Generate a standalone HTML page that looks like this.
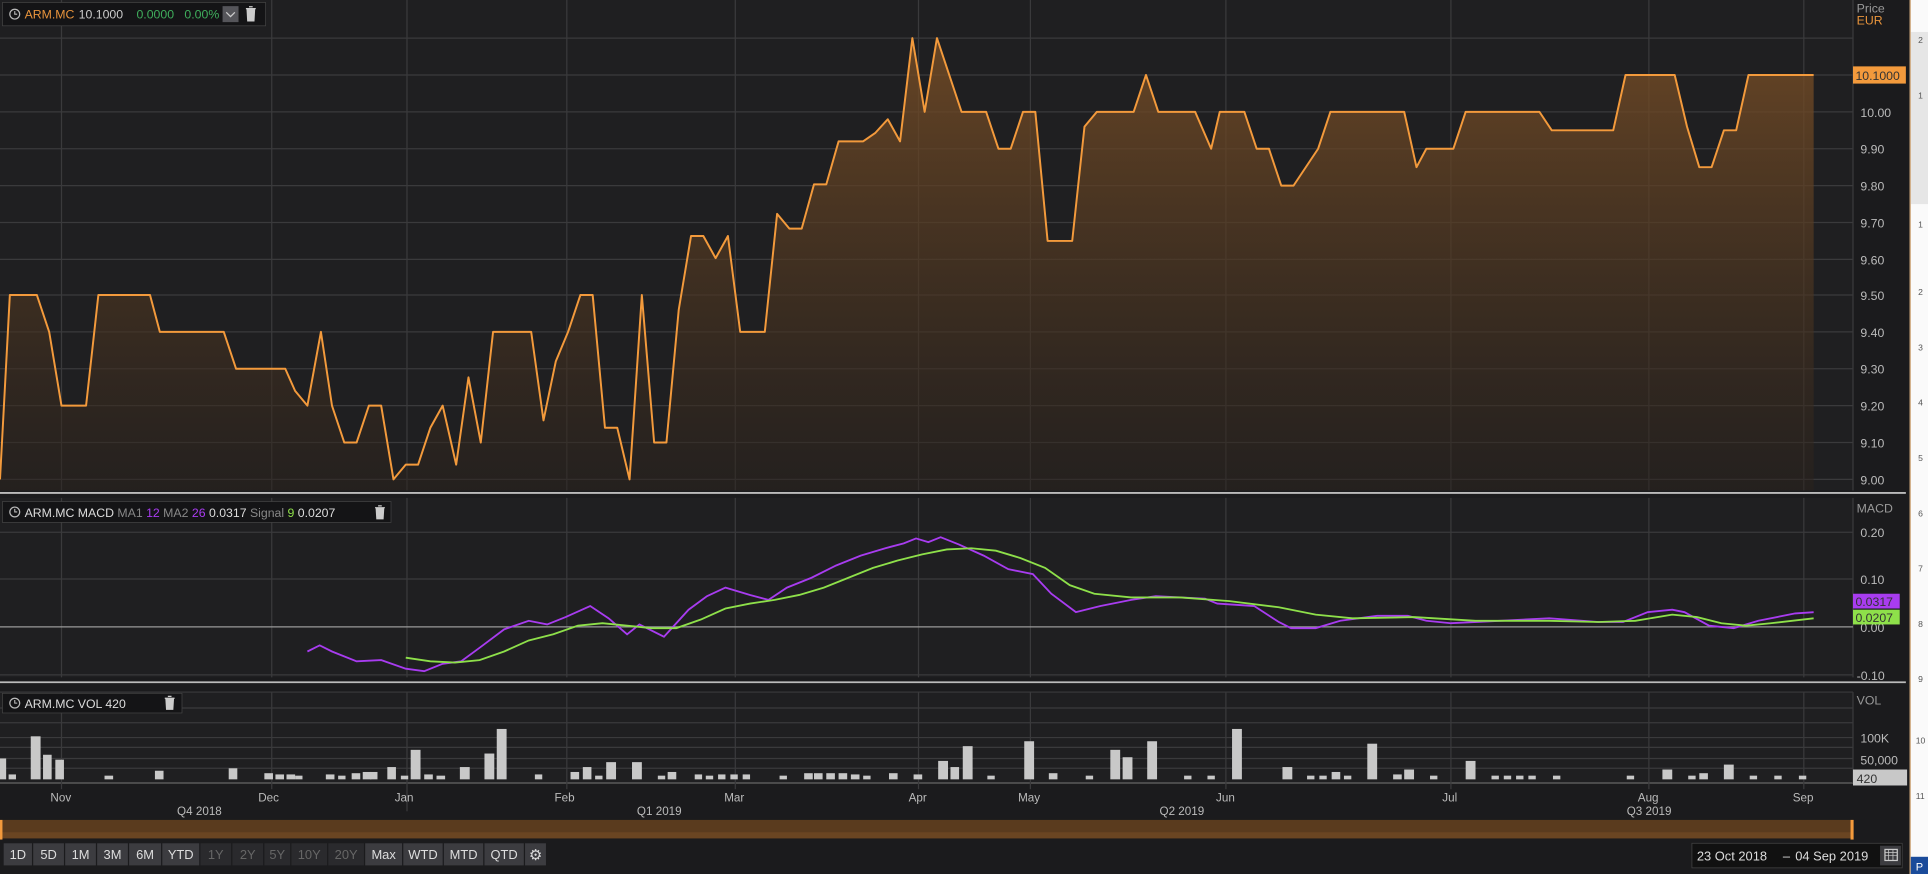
<!DOCTYPE html>
<html><head><meta charset="utf-8"><style>
html,body{margin:0;padding:0;background:#1b1b1d;overflow:hidden}
svg{display:block}
text{font-family:"Liberation Sans",sans-serif}
</style></head><body>
<svg width="1928" height="874" viewBox="0 0 1568 711" preserveAspectRatio="none" xmlns="http://www.w3.org/2000/svg">
<defs>
<linearGradient id="pf" x1="0" y1="0" x2="0" y2="1">
<stop offset="0" stop-color="#7a4f26" stop-opacity="0.8"/>
<stop offset="1" stop-color="#2a221c" stop-opacity="0.5"/>
</linearGradient>
</defs>
<rect x="0" y="0" width="1568" height="711" fill="#1b1b1d"/>
<rect x="0" y="0" width="1507" height="399" fill="#1f1f21"/>
<g stroke="#3a3a3c" stroke-width="1">
<line x1="0" y1="31" x2="1507" y2="31"/><line x1="0" y1="61" x2="1507" y2="61"/><line x1="0" y1="91" x2="1507" y2="91"/><line x1="0" y1="121" x2="1507" y2="121"/><line x1="0" y1="151" x2="1507" y2="151"/><line x1="0" y1="181" x2="1507" y2="181"/><line x1="0" y1="211" x2="1507" y2="211"/><line x1="0" y1="240" x2="1507" y2="240"/><line x1="0" y1="270" x2="1507" y2="270"/><line x1="0" y1="300" x2="1507" y2="300"/><line x1="0" y1="330" x2="1507" y2="330"/><line x1="0" y1="360" x2="1507" y2="360"/><line x1="0" y1="390" x2="1507" y2="390"/>
<line x1="50" y1="0" x2="50" y2="399"/><line x1="221" y1="0" x2="221" y2="399"/><line x1="331" y1="0" x2="331" y2="399"/><line x1="461" y1="0" x2="461" y2="399"/><line x1="598" y1="0" x2="598" y2="399"/><line x1="747" y1="0" x2="747" y2="399"/><line x1="838" y1="0" x2="838" y2="399"/><line x1="997" y1="0" x2="997" y2="399"/><line x1="1180" y1="0" x2="1180" y2="399"/><line x1="1341" y1="0" x2="1341" y2="399"/><line x1="1467" y1="0" x2="1467" y2="399"/>
<line x1="1507" y1="0" x2="1507" y2="399"/>
</g>
<path fill="url(#pf)" d="M0,390 L8,240 L30,240 L40,270 L50,330 L70,330 L80,240 L122,240 L130,270 L182,270 L192,300 L232,300 L240,318 L250,330 L261,270 L270,330 L280,360 L290,360 L300,330 L310,330 L320,390 L330,378 L340,378 L350,348 L360,330 L371,378 L381,307 L391,360 L401,270 L432,270 L442,342 L452,294 L462,270 L472,240 L482,240 L492,348 L502,348 L512,390 L522,240 L532,360 L542,360 L552,252 L562,192 L572,192 L582,210 L592,192 L602,270 L622,270 L632,174 L642,186 L652,186 L662,150 L672,150 L682,115 L702,115 L712,108 L722,97 L732,115 L742,31 L752,91 L762,31 L782,91 L802,91 L812,121 L822,121 L832,91 L842,91 L852,196 L872,196 L882,103 L892,91 L922,91 L932,61 L942,91 L972,91 L985,121 L992,91 L1012,91 L1022,121 L1032,121 L1042,151 L1052,151 L1072,121 L1082,91 L1142,91 L1152,136 L1160,121 L1182,121 L1192,91 L1252,91 L1262,106 L1312,106 L1322,61 L1362,61 L1372,103 L1382,136 L1392,136 L1402,106 L1412,106 L1422,61 L1475,61 L1475,399 L0,399 Z"/>
<path fill="none" stroke="#f39a3c" stroke-width="1.6" stroke-linejoin="round" d="M0,390 L8,240 L30,240 L40,270 L50,330 L70,330 L80,240 L122,240 L130,270 L182,270 L192,300 L232,300 L240,318 L250,330 L261,270 L270,330 L280,360 L290,360 L300,330 L310,330 L320,390 L330,378 L340,378 L350,348 L360,330 L371,378 L381,307 L391,360 L401,270 L432,270 L442,342 L452,294 L462,270 L472,240 L482,240 L492,348 L502,348 L512,390 L522,240 L532,360 L542,360 L552,252 L562,192 L572,192 L582,210 L592,192 L602,270 L622,270 L632,174 L642,186 L652,186 L662,150 L672,150 L682,115 L702,115 L712,108 L722,97 L732,115 L742,31 L752,91 L762,31 L782,91 L802,91 L812,121 L822,121 L832,91 L842,91 L852,196 L872,196 L882,103 L892,91 L922,91 L932,61 L942,91 L972,91 L985,121 L992,91 L1012,91 L1022,121 L1032,121 L1042,151 L1052,151 L1072,121 L1082,91 L1142,91 L1152,136 L1160,121 L1182,121 L1192,91 L1252,91 L1262,106 L1312,106 L1322,61 L1362,61 L1372,103 L1382,136 L1392,136 L1402,106 L1412,106 L1422,61 L1475,61"/>
<rect x="2" y="2" width="214" height="19" fill="#141416" stroke="#444" stroke-width="0.6"/>
<circle cx="12" cy="11.5" r="4" fill="none" stroke="#bbb" stroke-width="1"/><path d="M12,9 L12,11.5 L14,11.5" stroke="#bbb" fill="none" stroke-width="0.9"/>
<text x="20" y="15" font-size="10" fill="#e8943c">ARM.MC</text>
<text x="64" y="15" font-size="10" fill="#ccc">10.1000</text>
<text x="111" y="15" font-size="10" fill="#3fae5c">0.0000</text>
<text x="150" y="15" font-size="10" fill="#3fae5c">0.00%</text>
<rect x="181" y="5" width="13" height="13" fill="#55555a"/><path d="M184,10 L187.5,13.5 L191,10" stroke="#ccc" fill="none" stroke-width="1"/>
<path d="M200,7 L208,7 M202.5,5.5 L205.5,5.5 M201,8 L201.5,17 L206.5,17 L207,8 Z" stroke="#ccc" fill="#ccc" stroke-width="1"/>
<g font-size="10" fill="#bbb">
<text x="1510" y="10" fill="#999">Price</text><text x="1510" y="20" fill="#e8943c">EUR</text>
<text x="1513" y="95">10.00</text><text x="1513" y="125">9.90</text><text x="1513" y="155">9.80</text><text x="1513" y="185">9.70</text><text x="1513" y="215">9.60</text><text x="1513" y="244">9.50</text><text x="1513" y="274">9.40</text><text x="1513" y="304">9.30</text><text x="1513" y="334">9.20</text><text x="1513" y="364">9.10</text><text x="1513" y="394">9.00</text>
</g>
<rect x="1507" y="54" width="43" height="14" fill="#f39a3c"/><text x="1509" y="65" font-size="10" fill="#333">10.1000</text>
<line x1="0" y1="401" x2="1550" y2="401" stroke="#bbb" stroke-width="1.5"/>
<rect x="0" y="405" width="1507" height="146" fill="#1f1f21"/>
<g stroke="#3a3a3c"><line x1="0" y1="433" x2="1507" y2="433"/><line x1="0" y1="471" x2="1507" y2="471"/><line x1="0" y1="549" x2="1507" y2="549"/><line x1="1507" y1="405" x2="1507" y2="551"/>
<line x1="50" y1="405" x2="50" y2="551"/><line x1="221" y1="405" x2="221" y2="551"/><line x1="331" y1="405" x2="331" y2="551"/><line x1="461" y1="405" x2="461" y2="551"/><line x1="598" y1="405" x2="598" y2="551"/><line x1="747" y1="405" x2="747" y2="551"/><line x1="838" y1="405" x2="838" y2="551"/><line x1="997" y1="405" x2="997" y2="551"/><line x1="1180" y1="405" x2="1180" y2="551"/><line x1="1341" y1="405" x2="1341" y2="551"/><line x1="1467" y1="405" x2="1467" y2="551"/></g>
<line x1="0" y1="510" x2="1507" y2="510" stroke="#999"/>
<path fill="none" stroke="#a83cf0" stroke-width="1.5" d="M250,530 L260,525 L270,530 L290,538 L310,537 L330,544 L345,546 L360,540 L375,538 L390,527 L410,512 L430,505 L445,508 L460,502 L480,493 L495,503 L510,516 L520,508 L540,518 L560,496 L575,485 L590,478 L610,484 L625,488 L640,478 L660,470 L680,460 L700,452 L720,446 L735,442 L745,438 L755,441 L765,437 L780,443 L800,452 L820,463 L840,467 L855,483 L875,498 L895,493 L920,488 L940,485 L960,486 L980,487 L990,491 L1020,493 L1040,506 L1050,511 L1070,511 L1090,505 L1120,501 L1145,501 L1160,505 L1180,507 L1220,505 L1260,503 L1300,506 L1320,506 L1340,498 L1360,496 L1370,498 L1390,509 L1410,511 L1430,505 L1460,499 L1475,498"/>
<path fill="none" stroke="#8ee04a" stroke-width="1.5" d="M330,535 L350,538 L370,539 L390,537 L410,530 L430,521 L450,516 L470,509 L490,507 L510,509 L530,511 L550,511 L570,504 L590,495 L610,491 L630,488 L650,484 L670,478 L690,470 L710,462 L730,456 L750,451 L770,447 L790,446 L810,448 L830,454 L850,462 L870,476 L890,483 L920,486 L960,486 L1000,489 L1040,494 L1070,500 L1100,503 L1150,502 L1200,505 L1260,505 L1300,506 L1330,505 L1360,500 L1380,502 L1400,507 L1420,509 L1440,507 L1475,503"/>
<rect x="2" y="408" width="316" height="17" fill="#141416" stroke="#444" stroke-width="0.6"/>
<circle cx="12" cy="416.5" r="4" fill="none" stroke="#bbb"/><path d="M12,414 L12,416.5 L14,416.5" stroke="#bbb" fill="none" stroke-width="0.9"/>
<text x="20" y="420.5" font-size="10" fill="#ddd">ARM.MC MACD <tspan fill="#888">MA1</tspan> <tspan fill="#a83cf0">12</tspan> <tspan fill="#888">MA2</tspan> <tspan fill="#a83cf0">26</tspan> 0.0317 <tspan fill="#888">Signal</tspan> <tspan fill="#8ee04a">9</tspan> 0.0207</text>
<path d="M305,413 L313,413 M307.5,411.5 L310.5,411.5 M306,414 L306.5,422 L311.5,422 L312,414 Z" stroke="#ccc" fill="#ccc"/>
<g font-size="10" fill="#bbb"><text x="1510" y="417" fill="#999">MACD</text><text x="1513" y="437">0.20</text><text x="1513" y="475">0.10</text><text x="1513" y="514">0.00</text><text x="1510" y="553">-0.10</text></g>
<rect x="1507" y="483" width="38" height="12" fill="#a83cf0"/><text x="1509" y="493" font-size="10" fill="#333">0.0317</text>
<rect x="1507" y="496" width="38" height="12" fill="#8ee04a"/><text x="1509" y="506" font-size="10" fill="#333">0.0207</text>
<line x1="0" y1="555" x2="1550" y2="555" stroke="#bbb" stroke-width="1.5"/>
<rect x="0" y="563" width="1507" height="74" fill="#1f1f21"/>
<g stroke="#3a3a3c"><line x1="0" y1="563" x2="1507" y2="563"/><line x1="0" y1="576" x2="1507" y2="576"/><line x1="0" y1="588" x2="1507" y2="588"/><line x1="0" y1="600" x2="1507" y2="600"/><line x1="0" y1="608" x2="1507" y2="608"/><line x1="0" y1="617" x2="1507" y2="617"/><line x1="0" y1="625" x2="1507" y2="625"/><line x1="0" y1="637" x2="1507" y2="637" stroke="#666"/><line x1="1507" y1="563" x2="1507" y2="637"/>
<line x1="50" y1="563" x2="50" y2="642"/><line x1="221" y1="563" x2="221" y2="642"/><line x1="331" y1="563" x2="331" y2="660"/><line x1="461" y1="563" x2="461" y2="642"/><line x1="598" y1="563" x2="598" y2="642"/><line x1="747" y1="563" x2="747" y2="642"/><line x1="838" y1="563" x2="838" y2="642"/><line x1="997" y1="563" x2="997" y2="642"/><line x1="1180" y1="563" x2="1180" y2="642"/><line x1="1341" y1="563" x2="1341" y2="642"/><line x1="1467" y1="563" x2="1467" y2="642"/></g>
<g fill="#c8c8c8">
<rect x="0" y="617" width="5" height="17"/><rect x="7" y="630" width="6" height="4"/><rect x="25" y="599" width="8" height="35"/><rect x="35" y="614" width="7" height="20"/><rect x="45" y="618" width="7" height="16"/><rect x="85" y="631" width="7" height="3"/><rect x="126" y="627" width="7" height="7"/><rect x="186" y="625" width="7" height="9"/><rect x="215" y="629" width="7" height="5"/><rect x="224" y="630" width="7" height="4"/><rect x="233" y="630" width="7" height="4"/><rect x="240" y="631" width="6" height="3"/><rect x="265" y="630" width="7" height="4"/><rect x="275" y="631" width="6" height="3"/><rect x="286" y="629" width="7" height="5"/><rect x="295" y="628" width="7" height="6"/><rect x="301" y="628" width="6" height="6"/><rect x="315" y="624" width="7" height="10"/><rect x="326" y="631" width="6" height="3"/><rect x="334" y="610" width="8" height="24"/><rect x="345" y="630" width="7" height="4"/><rect x="355" y="631" width="7" height="3"/><rect x="374" y="624" width="8" height="10"/><rect x="394" y="613" width="8" height="21"/><rect x="404" y="593" width="8" height="41"/><rect x="435" y="630" width="6" height="4"/><rect x="464" y="628" width="7" height="6"/><rect x="474" y="624" width="7" height="10"/><rect x="484" y="631" width="6" height="3"/><rect x="493" y="620" width="8" height="14"/><rect x="514" y="620" width="8" height="14"/><rect x="535" y="631" width="6" height="3"/><rect x="543" y="628" width="7" height="6"/><rect x="565" y="630" width="6" height="4"/><rect x="574" y="631" width="6" height="3"/><rect x="584" y="630" width="6" height="4"/><rect x="594" y="630" width="6" height="4"/><rect x="604" y="630" width="6" height="4"/><rect x="634" y="631" width="6" height="3"/><rect x="654" y="629" width="7" height="5"/><rect x="662" y="629" width="7" height="5"/><rect x="672" y="629" width="7" height="5"/><rect x="682" y="629" width="7" height="5"/><rect x="692" y="630" width="7" height="4"/><rect x="702" y="631" width="6" height="3"/><rect x="723" y="629" width="7" height="5"/><rect x="743" y="630" width="7" height="4"/><rect x="763" y="619" width="8" height="15"/><rect x="773" y="624" width="7" height="10"/><rect x="783" y="607" width="8" height="27"/><rect x="803" y="631" width="6" height="3"/><rect x="833" y="603" width="8" height="31"/><rect x="853" y="629" width="7" height="5"/><rect x="883" y="631" width="6" height="3"/><rect x="903" y="610" width="8" height="24"/><rect x="913" y="616" width="8" height="18"/><rect x="933" y="603" width="8" height="31"/><rect x="963" y="631" width="6" height="3"/><rect x="982" y="631" width="6" height="3"/><rect x="1002" y="593" width="8" height="41"/><rect x="1043" y="624" width="8" height="10"/><rect x="1063" y="631" width="6" height="3"/><rect x="1073" y="631" width="6" height="3"/><rect x="1083" y="628" width="7" height="6"/><rect x="1093" y="631" width="6" height="3"/><rect x="1112" y="605" width="8" height="29"/><rect x="1133" y="630" width="7" height="4"/><rect x="1142" y="626" width="8" height="8"/><rect x="1163" y="631" width="6" height="3"/><rect x="1192" y="619" width="8" height="15"/><rect x="1213" y="631" width="6" height="3"/><rect x="1223" y="631" width="6" height="3"/><rect x="1233" y="631" width="6" height="3"/><rect x="1243" y="631" width="6" height="3"/><rect x="1263" y="631" width="6" height="3"/><rect x="1323" y="631" width="6" height="3"/><rect x="1352" y="626" width="8" height="8"/><rect x="1373" y="631" width="6" height="3"/><rect x="1382" y="629" width="7" height="5"/><rect x="1402" y="622" width="8" height="12"/><rect x="1423" y="631" width="6" height="3"/><rect x="1443" y="631" width="6" height="3"/><rect x="1463" y="631" width="6" height="3"/>
</g>
<rect x="2" y="564" width="146" height="16" fill="#141416" stroke="#444" stroke-width="0.6"/>
<circle cx="12" cy="572" r="4" fill="none" stroke="#bbb"/><path d="M12,569.5 L12,572 L14,572" stroke="#bbb" fill="none" stroke-width="0.9"/>
<text x="20" y="576" font-size="10" fill="#ddd">ARM.MC VOL  420</text>
<path d="M134,568 L142,568 M136.5,566.5 L139.5,566.5 M135,569 L135.5,577 L140.5,577 L141,569 Z" stroke="#ccc" fill="#ccc"/>
<g font-size="10" fill="#bbb"><text x="1510" y="573" fill="#999">VOL</text><text x="1513" y="604">100K</text><text x="1513" y="622">50,000</text></g>
<rect x="1507" y="626" width="44" height="13" fill="#c8c8c8"/><text x="1510" y="637" font-size="10" fill="#333">420</text>
<g font-size="9.5" fill="#bbb">
<text x="41" y="652">Nov</text><text x="210" y="652">Dec</text><text x="321" y="652">Jan</text><text x="451" y="652">Feb</text><text x="589" y="652">Mar</text><text x="739" y="652">Apr</text><text x="828" y="652">May</text><text x="989" y="652">Jun</text><text x="1173" y="652">Jul</text><text x="1332" y="652">Aug</text><text x="1458" y="652">Sep</text>
<text x="144" y="663">Q4 2018</text><text x="518" y="663">Q1 2019</text><text x="943" y="663">Q2 2019</text><text x="1323" y="663">Q3 2019</text>
</g>
<rect x="0" y="667" width="1507" height="15" fill="#5a3b1e"/>
<rect x="0" y="677" width="1507" height="5" fill="#6a4522"/>
<rect x="0" y="667" width="2" height="16" fill="#f39a3c"/><rect x="1505" y="667" width="2.5" height="16" fill="#f39a3c"/>
<g font-size="10.5" text-anchor="middle">
<rect x="3" y="686" width="23" height="18" fill="#3c3c40"/><text x="14.5" y="699" fill="#ddd">1D</text>
<rect x="27" y="686" width="25" height="18" fill="#3c3c40"/><text x="39.5" y="699" fill="#ddd">5D</text>
<rect x="53" y="686" width="25" height="18" fill="#3c3c40"/><text x="65.5" y="699" fill="#ddd">1M</text>
<rect x="79" y="686" width="25" height="18" fill="#3c3c40"/><text x="91.5" y="699" fill="#ddd">3M</text>
<rect x="105" y="686" width="26" height="18" fill="#3c3c40"/><text x="118" y="699" fill="#ddd">6M</text>
<rect x="132" y="686" width="30" height="18" fill="#3c3c40"/><text x="147" y="699" fill="#ddd">YTD</text>
<rect x="163" y="686" width="25" height="18" fill="#2a2a2d"/><text x="175.5" y="699" fill="#666">1Y</text>
<rect x="189" y="686" width="25" height="18" fill="#2a2a2d"/><text x="201.5" y="699" fill="#666">2Y</text>
<rect x="215" y="686" width="21" height="18" fill="#2a2a2d"/><text x="225.5" y="699" fill="#666">5Y</text>
<rect x="237" y="686" width="29" height="18" fill="#2a2a2d"/><text x="251.5" y="699" fill="#666">10Y</text>
<rect x="267" y="686" width="29" height="18" fill="#2a2a2d"/><text x="281.5" y="699" fill="#666">20Y</text>
<rect x="297" y="686" width="30" height="18" fill="#3c3c40"/><text x="312" y="699" fill="#ddd">Max</text>
<rect x="328" y="686" width="32" height="18" fill="#3c3c40"/><text x="344" y="699" fill="#ddd">WTD</text>
<rect x="361" y="686" width="32" height="18" fill="#3c3c40"/><text x="377" y="699" fill="#ddd">MTD</text>
<rect x="394" y="686" width="32" height="18" fill="#3c3c40"/><text x="410" y="699" fill="#ddd">QTD</text>
<rect x="427" y="686" width="17" height="18" fill="#3c3c40"/><text x="435.5" y="699.5" fill="#ddd" font-size="12">⚙</text>
</g>
<rect x="1376" y="686" width="171" height="20" fill="#111" stroke="#444" stroke-width="0.6"/>
<text x="1380" y="700" font-size="10.5" fill="#ddd">23 Oct 2018</text>
<text x="1450" y="700" font-size="10.5" fill="#ddd">–</text>
<text x="1460" y="700" font-size="10.5" fill="#ddd">04 Sep 2019</text>
<rect x="1529" y="688" width="17" height="16" fill="#3c3c40"/><rect x="1533" y="691" width="10" height="9" fill="none" stroke="#ccc"/><path d="M1533,693.5 H1543 M1533,696 H1543 M1536,691 V700 M1539.5,691 V700" stroke="#ccc" stroke-width="0.6"/>
<rect x="1553" y="0" width="15" height="711" fill="#fafafa"/>
<rect x="1554" y="26" width="14" height="140" fill="#e6e6e6"/>
<rect x="1553" y="0" width="1" height="711" fill="#c9a070"/>
<rect x="1554" y="697" width="14" height="14" fill="#1a4b9a"/><text x="1558" y="708" font-size="9" fill="#fff">P</text>
<g font-size="7" fill="#555"><text x="1560" y="35">2</text><text x="1560" y="80">1</text><text x="1560" y="185">1</text><text x="1560" y="240">2</text><text x="1560" y="285">3</text><text x="1560" y="330">4</text><text x="1560" y="375">5</text><text x="1560" y="420">6</text><text x="1560" y="465">7</text><text x="1560" y="510">8</text><text x="1560" y="555">9</text><text x="1558" y="605">10</text><text x="1558" y="650">11</text></g>
</svg>
</body></html>
